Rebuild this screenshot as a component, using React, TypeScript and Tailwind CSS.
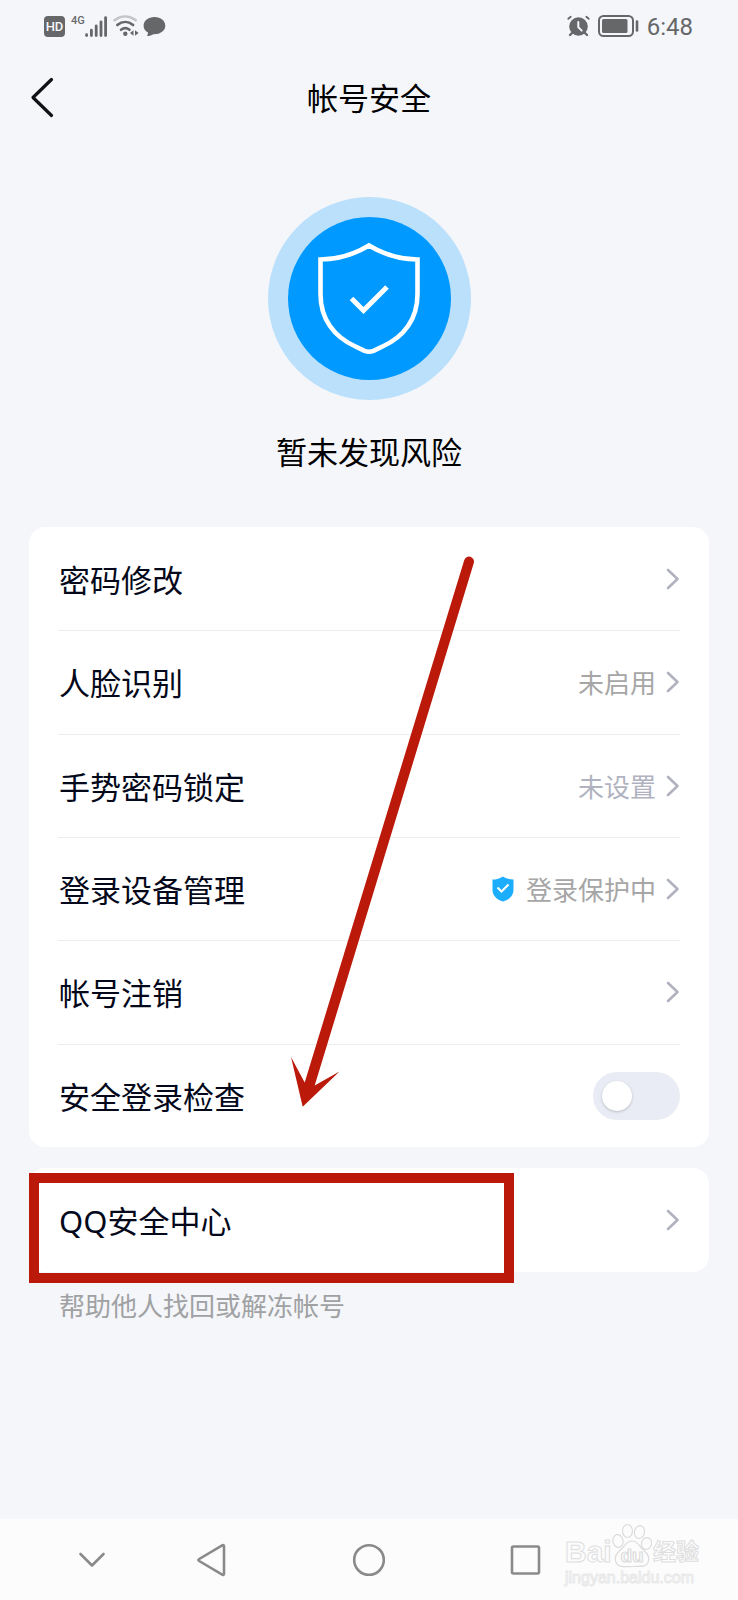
import React, { useState } from 'react';

interface RowItem {
    id: string;
    label: string;
    value?: string;
    valueClass?: string;
    shield?: boolean;
}

const rows: RowItem[] = [
    { id: 'password', label: '密码修改' },
    { id: 'face', label: '人脸识别', value: '未启用', valueClass: 'text-[#a6a6a6]' },
    { id: 'gesture', label: '手势密码锁定', value: '未设置', valueClass: 'text-[#b0b3bf]' },
    { id: 'devices', label: '登录设备管理', value: '登录保护中', valueClass: 'text-[#a6a6a6]', shield: true },
    { id: 'cancel', label: '帐号注销' },
];

const Chevron: React.FC = () => (
    <svg className="w-3.5 h-6 shrink-0" viewBox="0 0 14 24" fill="none" stroke="#b0b3bf" strokeWidth="2.6" strokeLinecap="round" strokeLinejoin="round">
        <path d="M2 3l9.500 9-9.500 9" />
    </svg>
);

const StatusBar: React.FC = () => (
    <div className="h-[52px] pl-11 pr-[45px] flex items-center justify-between text-[#666769]">
        <div className="flex items-center">
            <span className="w-[21px] h-[21px] rounded-[4px] bg-[#666769] text-[#f4f6fa] text-[13px] leading-[22px] font-medium text-center font-['Roboto',sans-serif]">HD</span>
            <span className="ml-1.5 mb-2.5 w-[14px] text-[11px] leading-3 font-medium font-['Roboto',sans-serif]">4G</span>
            <svg className="w-[22px] h-[21px]" viewBox="0 0 22 21" stroke="currentColor" strokeWidth="2.8" strokeLinecap="round">
                <path d="M1.600 18.600v.9M6.400 14.200v5.300M11.200 10v9.500M16 5.800v13.700M20.600 1.600v17.900" />
            </svg>
            <svg className="ml-1.5 w-[26px] h-[22px]" viewBox="0 0 26 22" fill="none" strokeWidth="2.6" strokeLinecap="round">
                <path d="M1.500 5.200c6.600-5 14.600-5 21.200 0" stroke="#c3c5c9" />
                <path d="M4.300 10c4.800-4 11-4 15.800 0" stroke="currentColor" />
                <path d="M8 14.800c2.600-2 6-2 8.500 0" stroke="currentColor" />
                <circle cx="12.300" cy="18.800" r="2.200" fill="currentColor" />
                <path d="M20.500 15.200v5.600l-3.500-2.800zM22 15.200v5.600l3.600-2.800z" fill="currentColor" />
            </svg>
            <svg className="ml-1 w-[23px] h-[21px]" viewBox="0 0 23 21" fill="currentColor">
                <path d="M11.500 1C5.200 1 .6 4.800.6 9.700c0 3 1.700 5.400 4.300 6.900.2 1.500-.2 2.500-1 3.500 2.600 0 4.900-.8 6.300-1.900 7 .3 12.100-3.400 12.100-8.500C22.300 4.800 17.800 1 11.500 1z" />
            </svg>
        </div>
        <div className="flex items-center">
            <svg className="w-6 h-[22px]" viewBox="0 0 24 22" fill="none" stroke="currentColor" strokeLinecap="round">
                <circle cx="12.500" cy="11.500" r="9.300" fill="currentColor" stroke="none" />
                <path d="M2.300 3.800l2.400-2M22.700 3.800l-2.400-2" strokeWidth="1.800" />
                <path d="M6 18l-2 2M19 18l2 2" strokeWidth="2.400" />
                <path d="M12.300 7v5.200l3.400 3.400" stroke="#f4f6fa" strokeWidth="2" />
            </svg>
            <svg className="ml-2 w-[41px] h-[22px]" viewBox="0 0 41 22" fill="none">
                <rect x="1" y="1" width="34" height="20" rx="4.500" stroke="currentColor" strokeWidth="2" />
                <rect x="4" y="4" width="25.500" height="14" rx="1.500" fill="currentColor" />
                <path d="M39 6.500v9" stroke="currentColor" strokeWidth="2.600" strokeLinecap="round" />
            </svg>
            <time className="ml-2 mt-0.5 text-[24px] leading-6 font-['Roboto',sans-serif]">6:48</time>
        </div>
    </div>
);

const Watermark: React.FC = () => (
    <div className="absolute right-[39px] bottom-3 w-[134px] flex flex-col text-[#fcfcfc] font-['Liberation_Sans','Noto_Sans_CJK_SC',sans-serif] font-bold whitespace-nowrap pointer-events-none">
        <div className="flex items-end justify-between">
            <span className="text-[30px] leading-8 [-webkit-text-stroke:1px_#dededf]">Bai</span>
            <svg className="w-10 h-[46px] shrink-0" viewBox="0 0 40 46" fill="#fcfcfc" stroke="#dcdcdd" strokeWidth="1.2">
                <ellipse cx="6" cy="19" rx="5" ry="6.500" transform="rotate(-12 6 19)" />
                <ellipse cx="15.500" cy="9" rx="5" ry="6.500" />
                <ellipse cx="27.500" cy="10" rx="5" ry="6.500" transform="rotate(10 27.500 10)" />
                <ellipse cx="34.500" cy="21.500" rx="5" ry="6" transform="rotate(14 34.500 21.500)" />
                <path d="M20 19c-6 0-7.500 6-11.500 9-5 4-6.500 8-4.500 12.500 2 4.500 7 4.500 16 4s13.500 1 16-4c2-4.500.5-8.500-4.500-12.500-4-3-5.500-9-11.500-9z" />
                <text x="20" y="40" textAnchor="middle" fontSize="19">du</text>
            </svg>
            <span className="text-[23px] leading-8 [-webkit-text-stroke:1px_#dededf]">经验</span>
        </div>
        <span className="text-[16px] leading-5 font-normal [-webkit-text-stroke:1px_#e8e8e9]">jingyan.baidu.com</span>
    </div>
);

const SystemNav: React.FC = () => (
    <nav className="relative mt-auto h-[81px] pl-[33px] bg-[#fcfcfc] grid grid-cols-[118fr_120fr_196fr_116fr_155fr] items-center justify-items-center">
        <button aria-label="收起">
            <svg className="w-9 h-9" viewBox="0 0 36 36" fill="none" stroke="#8a8a8a" strokeWidth="2.6" strokeLinecap="round" strokeLinejoin="round">
                <path d="M6.500 12L18 23.500l11.500-11.500" />
            </svg>
        </button>
        <button aria-label="返回上一级">
            <svg className="w-9 h-9" viewBox="0 0 36 36" fill="none" stroke="#8a8a8a" strokeWidth="2.6" strokeLinejoin="round">
                <path d="M6.200 17L29.200 3.400q1.800-.9 1.800 1v27.200q0 1.900-1.800 1L6.200 19q-1.600-1 0-2z" />
            </svg>
        </button>
        <button aria-label="主屏幕">
            <svg className="w-9 h-9" viewBox="0 0 36 36" fill="none" stroke="#8a8a8a" strokeWidth="2.6">
                <circle cx="18" cy="18" r="14.800" />
            </svg>
        </button>
        <button aria-label="最近任务">
            <svg className="w-9 h-9" viewBox="0 0 36 36" fill="none" stroke="#8a8a8a" strokeWidth="2.6">
                <rect x="5" y="4.500" width="27" height="27" rx="1.500" />
            </svg>
        </button>
        <Watermark />
    </nav>
);

export default function App() {
    const [loginCheck, setLoginCheck] = useState(false);

    return (
        <div className="min-h-screen flex flex-col bg-[#f4f6fa] text-[#03081a] font-['Noto_Sans','Noto_Sans_CJK_SC',sans-serif]">
            <StatusBar />

            <header className="h-[92px] px-7 grid grid-cols-[1fr_auto_1fr] items-center">
                <button aria-label="返回" className="justify-self-start">
                    <svg className="w-7 h-11" viewBox="0 0 28 44" fill="none" stroke="#111214" strokeWidth="3.2" strokeLinecap="round" strokeLinejoin="round">
                        <path d="M23.500 3.500L5 21.500l18.500 18" />
                    </svg>
                </button>
                <h1 className="text-[31px] leading-10 text-black">帐号安全</h1>
            </header>

            <main className="px-[29px] flex flex-col">
                <section className="mt-[53px] flex flex-col items-center">
                    <div className="w-[203px] h-[203px] rounded-full bg-[#bbe0fb] flex items-center justify-center">
                        <div className="w-[163px] h-[163px] rounded-full bg-[#0099ff] flex items-center justify-center">
                            <svg className="w-[104px] h-[114px]" viewBox="0 1 104 114" fill="none" stroke="#fff" strokeWidth="4.6">
                                <path d="M52 4.500C37 13.500 23 18.500 3.500 18.500V53C3.500 78 17 96 38.500 105.500l9 4.300q4.500 1.800 9 0l9-4.300C87 96 100.500 78 100.500 53V18.500C81 18.500 67 13.500 52 4.500z" />
                                <path d="M34.500 57.500l12 12L70 46" strokeWidth="5" />
                            </svg>
                        </div>
                    </div>
                    <p className="mt-8 text-[31px] leading-10 text-black">暂未发现风险</p>
                </section>

                <section className="relative mt-[55px] px-[29px] min-h-[620px] grid auto-rows-fr rounded-2xl bg-white">
                    {rows.map(row => (
                        <button key={row.id} className="pl-px flex items-center border-t border-[#ebecee] first:border-transparent text-left">
                            <span className="flex-1 pt-0.5 text-[31px] leading-10">{row.label}</span>
                            {row.shield && (
                                <svg className="mr-3 w-[22px] h-[26px]" viewBox="0 0 22 26">
                                    <path d="M11 .5C8 2.500 4.500 3.600.5 3.600V14c0 5.500 4 9.500 10.500 11.500C17.500 23.500 21.500 19.500 21.500 14V3.600C17.500 3.600 14 2.500 11 .5z" fill="#1caefc" />
                                    <path d="M5.500 11.500l4 4 7-7" fill="none" stroke="#fff" strokeWidth="2" />
                                </svg>
                            )}
                            {row.value && <span className={`mr-2.5 pt-0.5 text-[26px] leading-9 ${row.valueClass}`}>{row.value}</span>}
                            <Chevron />
                        </button>
                    ))}
                    <label className="pl-px flex items-center justify-between border-t border-[#ebecee]">
                        <span className="pt-0.5 text-[31px] leading-10">安全登录检查</span>
                        <input
                            type="checkbox"
                            role="switch"
                            checked={loginCheck}
                            onChange={e => setLoginCheck(e.target.checked)}
                            className="appearance-none w-[87px] h-12 px-[9px] rounded-full bg-[#e9ecf4] flex items-center checked:justify-end checked:bg-[#0099ff] before:w-[30px] before:h-[30px] before:rounded-full before:bg-white before:shadow-[0_1px_3px_rgba(0,0,0,0.2)]"
                        />
                    </label>

                    {/* arrow pointing at the security center entry */}
                    <svg className="absolute left-[250px] top-[24px] w-[210px] h-[560px] pointer-events-none" viewBox="0 0 210 560" fill="#bb1a0b">
                        <path d="M185.200 9.200A5 5 0 0 1 194.800 12L35.700 534.500L60.500 520.500L23.700 555.700L12 506L25.700 531.500z" />
                    </svg>
                </section>

                <section className="relative mt-[21px] px-[29px] rounded-2xl bg-white">
                    <button className="w-full h-[104px] pl-px flex items-center text-left">
                        <span className="flex-1 pt-0.5 text-[31px] leading-10">QQ安全中心</span>
                        <Chevron />
                    </button>
                    <div className="absolute left-0 top-[5px] w-[485px] h-[110px] border-10 border-[#bb1a0b] pointer-events-none" />
                </section>
                <p className="mt-4 pl-[30px] text-[26px] leading-9 text-[#a0a1a3]">帮助他人找回或解冻帐号</p>
            </main>

            <SystemNav />
        </div>
    );
}
